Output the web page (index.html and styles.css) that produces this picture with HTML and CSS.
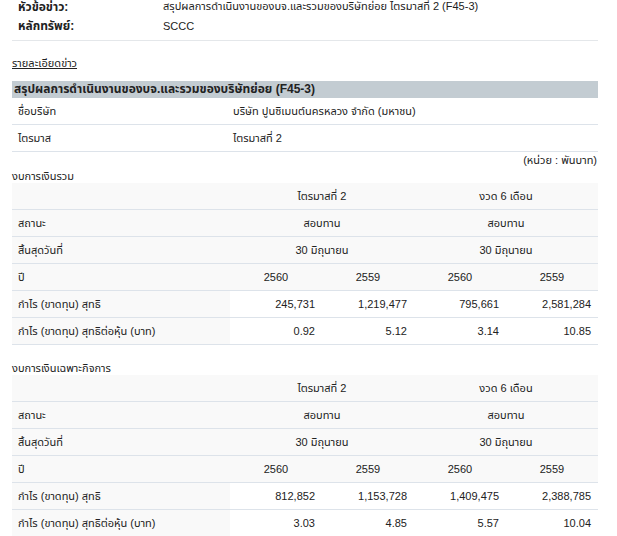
FILE: index.html
```html
<!DOCTYPE html>
<html lang="th">
<head>
<meta charset="utf-8">
<title>สรุปผลการดำเนินงาน</title>
<link rel="stylesheet" href="styles.css">
</head>
<body>
<div class="page">
  <table class="meta">
    <tr><th>หัวข้อข่าว:</th><td>สรุปผลการดำเนินงานของบจ.และรวมของบริษัทย่อย ไตรมาสที่ 2 (F45-3)</td></tr>
    <tr><th>หลักทรัพย์:</th><td>SCCC</td></tr>
  </table>

  <div class="detail-link"><a href="#">รายละเอียดข่าว</a></div>

  <div class="bar">สรุปผลการดำเนินงานของบจ.และรวมของบริษัทย่อย (F45-3)</div>
  <table class="info">
    <tr><td class="lbl">ชื่อบริษัท</td><td class="val">บริษัท ปูนซิเมนต์นครหลวง จำกัด (มหาชน)</td></tr>
    <tr><td class="lbl">ไตรมาส</td><td class="val">ไตรมาสที่ 2</td></tr>
  </table>
  <div class="unit">(หน่วย : พันบาท)</div>

  <div class="sec-title">งบการเงินรวม</div>
  <table class="fin">
    <colgroup><col class="c1"><col class="cn"><col class="cn"><col class="cn"><col class="cn"></colgroup>
    <tr class="g"><td></td><td colspan="2" class="c">ไตรมาสที่ 2</td><td colspan="2" class="c">งวด 6 เดือน</td></tr>
    <tr class="g"><td>สถานะ</td><td colspan="2" class="c">สอบทาน</td><td colspan="2" class="c">สอบทาน</td></tr>
    <tr class="g"><td>สิ้นสุดวันที่</td><td colspan="2" class="c">30 มิถุนายน</td><td colspan="2" class="c">30 มิถุนายน</td></tr>
    <tr class="g"><td>ปี</td><td class="c">2560</td><td class="c">2559</td><td class="c">2560</td><td class="c">2559</td></tr>
    <tr><td class="lbl">กำไร (ขาดทุน) สุทธิ</td><td class="r">245,731</td><td class="r">1,219,477</td><td class="r">795,661</td><td class="r">2,581,284</td></tr>
    <tr><td class="lbl">กำไร (ขาดทุน) สุทธิต่อหุ้น (บาท)</td><td class="r">0.92</td><td class="r">5.12</td><td class="r">3.14</td><td class="r">10.85</td></tr>
  </table>

  <div class="sec-title second">งบการเงินเฉพาะกิจการ</div>
  <table class="fin">
    <colgroup><col class="c1"><col class="cn"><col class="cn"><col class="cn"><col class="cn"></colgroup>
    <tr class="g"><td></td><td colspan="2" class="c">ไตรมาสที่ 2</td><td colspan="2" class="c">งวด 6 เดือน</td></tr>
    <tr class="g"><td>สถานะ</td><td colspan="2" class="c">สอบทาน</td><td colspan="2" class="c">สอบทาน</td></tr>
    <tr class="g"><td>สิ้นสุดวันที่</td><td colspan="2" class="c">30 มิถุนายน</td><td colspan="2" class="c">30 มิถุนายน</td></tr>
    <tr class="g"><td>ปี</td><td class="c">2560</td><td class="c">2559</td><td class="c">2560</td><td class="c">2559</td></tr>
    <tr><td class="lbl">กำไร (ขาดทุน) สุทธิ</td><td class="r">812,852</td><td class="r">1,153,728</td><td class="r">1,409,475</td><td class="r">2,388,785</td></tr>
    <tr><td class="lbl">กำไร (ขาดทุน) สุทธิต่อหุ้น (บาท)</td><td class="r">3.03</td><td class="r">4.85</td><td class="r">5.57</td><td class="r">10.04</td></tr>
  </table>
</div>
</body>
</html>
```
FILE: styles.css
```css
html, body {
  margin: 0;
  padding: 0;
  background: #ffffff;
}
body {
  font-family: Tahoma, "Liberation Sans", "Noto Sans Thai", "Noto Sans", sans-serif;
  font-size: 11px;
  color: #222222;
}
.page {
  width: 586px;
  margin-left: 12px;
  margin-top: -3px;
}
table {
  border-collapse: collapse;
  width: 100%;
}
td, th {
  padding: 0;
  font-weight: normal;
  text-align: left;
}
.meta {
  border-bottom: 1px solid #e4e7ea;
}
.meta th {
  width: 145px;
  padding-left: 6px;
  height: 19px;
  font-weight: bold;
  font-size: 12px;
}
.meta td {
  height: 19px;
}
.meta tr:last-child th, .meta tr:last-child td {
  padding-bottom: 5px;
}
.detail-link {
  margin-top: 14px;
  height: 16px;
  line-height: 16px;
}
.detail-link a {
  color: #222222;
  text-decoration: underline;
}
.bar {
  margin-top: 10px;
  background: #c3ccd2;
  height: 17px;
  line-height: 17px;
  padding-left: 2px;
  font-weight: bold;
  font-size: 12px;
}
.info td {
  height: 26px;
  border-bottom: 1px solid #dde3ea;
  vertical-align: middle;
}
.info td.lbl {
  width: 212px;
  padding-left: 6px;
}
.info td.val {
  padding-left: 3px;
}
.unit {
  text-align: right;
  height: 16px;
  line-height: 16px;
  margin-top: 0;
  padding-right: 1px;
}
.sec-title {
  height: 14px;
  line-height: 14px;
  padding-top: 1px;
}
.sec-title.second {
  margin-top: 15px;
}
.fin col.c1 { width: 218px; }
.fin col.cn { width: 92px; }
.fin td {
  height: 26px;
  border-bottom: 1px solid #dde3ea;
  vertical-align: middle;
  background: #ffffff;
}
.fin tr.g td {
  background: #f9f9f9;
}
.fin td:first-child {
  padding-left: 6px;
  background: #f9f9f9;
}
.fin td.c { text-align: center; }
.fin td.r { text-align: right; padding-right: 7px; }
```
